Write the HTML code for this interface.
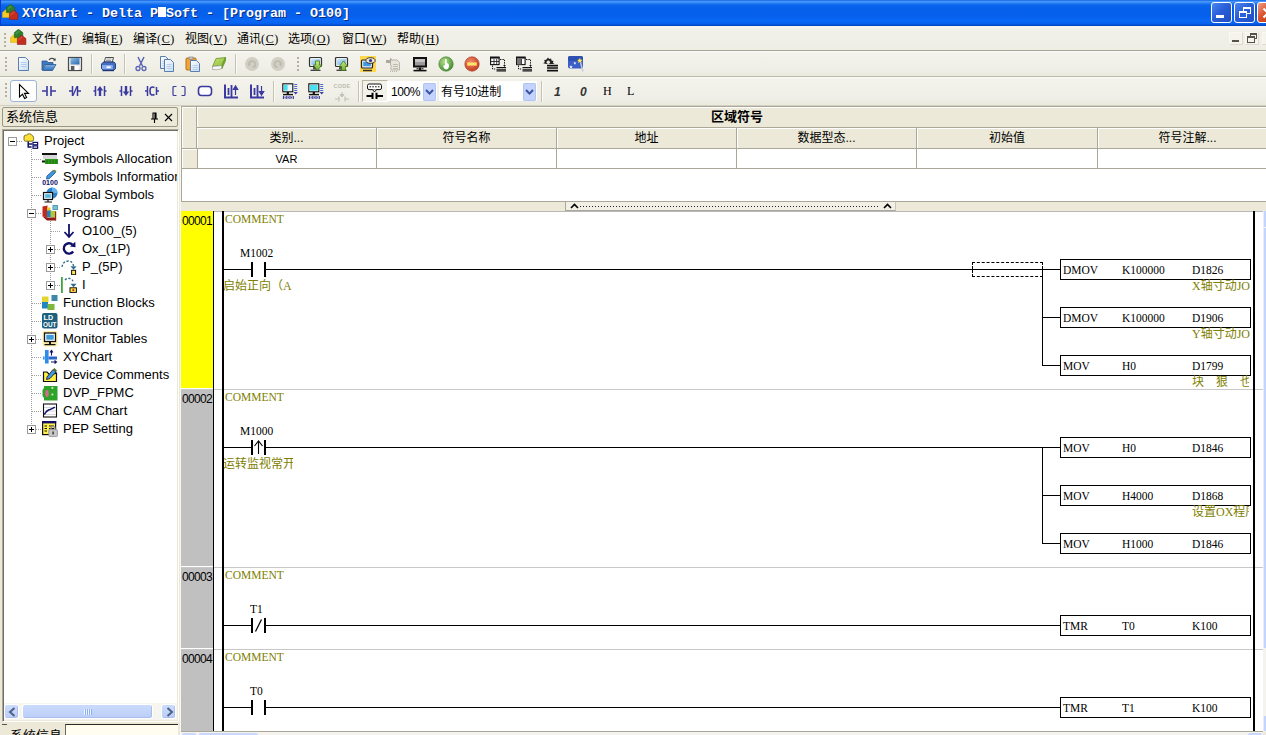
<!DOCTYPE html>
<html lang="zh-CN">
<head>
<meta charset="utf-8">
<title>XYChart - Delta PMSoft - [Program - O100]</title>
<style>
*{box-sizing:border-box;margin:0;padding:0}
html,body{width:1266px;height:735px;overflow:hidden}
body{position:relative;background:#ECE9D8;font-family:"Liberation Sans","Noto Sans CJK SC",sans-serif;font-size:12px;color:#000}
.abs{position:absolute}
.cn{font-family:"Liberation Sans","Noto Sans CJK SC",sans-serif;font-size:12px}
/* title bar */
#title{position:absolute;left:0;top:0;width:1266px;height:26px;box-shadow:inset 1px 0 0 #0A38C8;background:linear-gradient(to bottom,#0A5CE6 0%,#4B98F8 5%,#2F86F6 11%,#0C66EC 19%,#0660EA 30%,#0560EC 60%,#0A68F6 80%,#0862EE 90%,#0450D2 96%,#0340B4 100%)}
#title .txt{position:absolute;left:22px;top:6px;font-family:"Liberation Mono","DejaVu Sans Mono",monospace;font-weight:bold;font-size:13.33px;line-height:16px;color:#fff;white-space:pre;text-shadow:1px 1px 0 #0A2A8A}
/* menu */
#menu{position:absolute;left:0;top:26px;width:1266px;height:24px;background:linear-gradient(to bottom,#F6F5F0 0,#F1F0E8 20%,#EFEEE5 100%)}
#menu .mi{position:absolute;top:6px;height:14px;line-height:14px;font-size:12px;white-space:nowrap}
#menu .mi u{text-decoration:underline}
.lat{font-family:"Liberation Serif",serif;letter-spacing:0.6px}
/* toolbars */
#tb1{position:absolute;left:0;top:50px;width:1266px;height:27px;background:linear-gradient(to bottom,#FCFCFA 0,#F3F2EB 8%,#F0EFE7 70%,#EBEADF);border-top:1px solid #A7A597;border-bottom:1px solid #BDBAA8}
#tb2{position:absolute;left:0;top:77px;width:1266px;height:29px;background:linear-gradient(to bottom,#FCFCFA 0,#F3F2EB 8%,#F0EFE7 70%,#EBEADF);border-bottom:1px solid #D2CFC0}
.mdi{position:absolute;top:6px;width:14px;height:13px;background:#F4F3EC;border:1px solid #F9F8F4;border-right-color:#DEDBCC;border-bottom-color:#DEDBCC}
.grip{position:absolute;width:2px;background:repeating-linear-gradient(to bottom,#B4B19E 0,#B4B19E 2px,transparent 2px,transparent 4px)}
.blk{display:inline-block;width:8px;height:10px;background:#fff;color:#fff;overflow:hidden;vertical-align:baseline;line-height:10px;text-shadow:none}
.cb{position:absolute;top:2px;width:21px;height:21px;border:1px solid #fff;border-radius:3px;background:linear-gradient(135deg,#4B86F0 0%,#2A5FD8 45%,#1E4FC4 100%)}
.cbx{background:linear-gradient(135deg,#F0A088 0%,#D8502A 45%,#C03A1A 100%)}
.sep{position:absolute;width:1px;background:#C5C2B2;box-shadow:1px 0 0 #FBFAF6}
/* left panel */
#lph{position:absolute;left:2px;top:107px;width:176px;height:20px;border:1px solid #9A9786;border-radius:2px;background:#ECE9D8}
#tree{position:absolute;left:2px;top:129px;width:177px;height:593px;background:#fff;border:1px solid;border-color:#ACA899 #fff #fff #ACA899;box-shadow:inset 1px 1px 0 #716F64,inset -1px -1px 0 #ECE9D8}
.tr{position:absolute;height:18px;line-height:18px;font-size:13px;white-space:nowrap;letter-spacing:0}
.sbb{position:absolute;background:linear-gradient(to bottom,#CBDBFD,#BCCEF8);border:1px solid #fff;border-radius:3px;box-shadow:inset -1px -1px 0 #A9BDEE}
/* grid */
#grid{position:absolute;left:181px;top:106px;width:1085px;height:96px;background:#fff;border-top:1px solid #ACA899;border-left:1px solid #ACA899;border-bottom:1px solid #ACA899}
.gh{position:absolute;background:#ECE9D8;border-right:1px solid #ACA899;border-bottom:1px solid #ACA899;box-shadow:inset 1px 1px 0 #fff;text-align:center;font-size:12px;line-height:20px;white-space:nowrap;overflow:hidden}
.gc{position:absolute;background:#fff;border-right:1px solid #ACA899;border-bottom:1px solid #ACA899;text-align:center;font-size:11px;line-height:20px}
/* ladder */
#lad{position:absolute;left:181px;top:211px;width:1082px;height:521px;background:#fff;overflow:hidden}
.ser{font-family:"Liberation Serif",serif;font-size:11.5px;line-height:14px;white-space:pre;position:absolute}
.olv{color:#808000}
.hl{position:absolute;height:1px;background:#000}
.vl{position:absolute;width:1px;background:#000}
.bar{position:absolute;width:2px;height:15px;background:#000}
.box{position:absolute;left:879px;width:191px;height:21px;border:1px solid #000;background:#fff}
.cmt{position:absolute;font-family:"Liberation Serif","Noto Sans CJK SC",sans-serif;font-size:12px;line-height:14px;white-space:nowrap;overflow:hidden;height:14px}
.lat2{font-family:"Liberation Serif",serif;font-size:12px}
.rs{position:absolute;left:0;width:1082px;height:1px;background:#C8C8C8}
.rn{position:absolute;left:0;width:31px;font-size:12px;line-height:14px;text-align:left;padding-left:1px;letter-spacing:-0.7px}
</style>
</head>
<body>
<!-- TITLE -->
<div id="title">
<svg class="abs" style="left:2px;top:4px" width="17" height="17" viewBox="0 0 17 17"><path d="M0.4 8.6L4 5.4L8 8.6V13.4H0.4Z" fill="#F4CC22" stroke="#D8A818" stroke-width=".5"/><path d="M4.4 3.6L8.5 0.3L12.8 3.6V8.6H4.4Z" fill="#2A7E2E" stroke="#1C5E22" stroke-width=".6"/><path d="M5.4 3.9L8.5 1.4L10 2.6L6 6Z" fill="#4FA048" opacity=".7"/><path d="M7.4 9.6L11.6 6.2L15.9 9.6V15.5H7.4Z" fill="#C42C20" stroke="#8A1C16" stroke-width=".6"/><path d="M8.2 9.9L11.6 7.2L13 8.4L8.2 12Z" fill="#DC5A44" opacity=".6"/></svg>
<div class="txt">XYChart - Delta P<span class="blk">M</span>Soft - [Program - O100]</div>
<div class="cb" style="left:1211px"><i style="position:absolute;left:4px;top:12px;width:8px;height:3px;background:#fff"></i></div>
<div class="cb" style="left:1234px"><i style="position:absolute;left:8px;top:4px;width:8px;height:7px;border:1px solid #fff;border-top-width:2px"></i><i style="position:absolute;left:4px;top:8px;width:8px;height:7px;border:1px solid #fff;border-top-width:2px;background:#2A5FD8"></i></div>
<div class="cb cbx" style="left:1257px"><svg class="abs" style="left:4px;top:4px" width="12" height="12" viewBox="0 0 12 12"><path d="M1.5 1.5L10.5 10.5M10.5 1.5L1.5 10.5" stroke="#fff" stroke-width="2.2"/></svg></div>
</div>
<!-- MENU -->
<div id="menu">
<div class="grip" style="left:4px;top:7px;height:16px"></div>
<svg class="abs" style="left:10px;top:3px" width="17" height="17" viewBox="0 0 17 17"><path d="M0.4 8.6L4 5.4L8 8.6V13.4H0.4Z" fill="#F4CC22" stroke="#D8A818" stroke-width=".5"/><path d="M4.4 3.6L8.5 0.3L12.8 3.6V8.6H4.4Z" fill="#2A7E2E" stroke="#1C5E22" stroke-width=".6"/><path d="M5.4 3.9L8.5 1.4L10 2.6L6 6Z" fill="#4FA048" opacity=".7"/><path d="M7.4 9.6L11.6 6.2L15.9 9.6V15.5H7.4Z" fill="#C42C20" stroke="#8A1C16" stroke-width=".6"/><path d="M8.2 9.9L11.6 7.2L13 8.4L8.2 12Z" fill="#DC5A44" opacity=".6"/></svg>
<div class="mi" style="left:32px">文件<span class="lat">(<u>F</u>)</span></div>
<div class="mi" style="left:82px">编辑<span class="lat">(<u>E</u>)</span></div>
<div class="mi" style="left:133px">编译<span class="lat">(<u>C</u>)</span></div>
<div class="mi" style="left:185px">视图<span class="lat">(<u>V</u>)</span></div>
<div class="mi" style="left:237px">通讯<span class="lat">(<u>C</u>)</span></div>
<div class="mi" style="left:288px">选项<span class="lat">(<u>O</u>)</span></div>
<div class="mi" style="left:342px">窗口<span class="lat">(<u>W</u>)</span></div>
<div class="mi" style="left:397px">帮助<span class="lat">(<u>H</u>)</span></div>
<div class="mdi" style="left:1229px"><i style="position:absolute;left:2px;top:7px;width:7px;height:2px;background:#55524A"></i></div>
<div class="mdi" style="left:1245px"><i style="position:absolute;left:4px;top:0px;width:7px;height:6px;border:1px solid #55524A;border-top-width:2px"></i><i style="position:absolute;left:1px;top:3px;width:8px;height:7px;border:1px solid #55524A;border-top-width:2px;background:#F4F3EC"></i></div>
<div class="mdi" style="left:1262px"></div>
</div>
<!-- TOOLBAR 1 -->
<svg width="0" height="0" style="position:absolute"><defs>
<linearGradient id="gpg" x1="0" y1="0" x2="1" y2="1"><stop offset="0" stop-color="#FFFFFF"/><stop offset="1" stop-color="#C4DCF4"/></linearGradient>
<linearGradient id="gbl" x1="0" y1="0" x2="0" y2="1"><stop offset="0" stop-color="#7FB2E8"/><stop offset="1" stop-color="#2E6CB8"/></linearGradient>
<linearGradient id="ggr" x1="0" y1="0" x2="0" y2="1"><stop offset="0" stop-color="#CDEB84"/><stop offset="1" stop-color="#6AAE2A"/></linearGradient>
<linearGradient id="gfl" x1="0" y1="0" x2="1" y2="1"><stop offset="0" stop-color="#8CC0E6"/><stop offset="1" stop-color="#2A68AE"/></linearGradient>
<linearGradient id="ger" x1="0" y1="0" x2="1" y2="1"><stop offset="0" stop-color="#C6E070"/><stop offset="1" stop-color="#8CBF3A"/></linearGradient>
<linearGradient id="gsc" x1="0" y1="0" x2="1" y2="1"><stop offset="0" stop-color="#CFEAF8"/><stop offset="1" stop-color="#5AA6D8"/></linearGradient>
<radialGradient id="ggc" cx=".4" cy=".35" r=".7"><stop offset="0" stop-color="#B6DE8A"/><stop offset="1" stop-color="#3E8A2A"/></radialGradient>
<radialGradient id="grc" cx=".4" cy=".35" r=".7"><stop offset="0" stop-color="#F08A6A"/><stop offset="1" stop-color="#C2391E"/></radialGradient>
</defs></svg>
<div id="tb1">
<div class="grip" style="left:5px;top:6px;height:16px"></div>
<svg class="abs" style="left:15px;top:5px" width="16" height="16" viewBox="0 0 16 16"><path d="M3.5 1.5h7l3 3v10h-10z" fill="url(#gpg)" stroke="#5A7DB0" stroke-width="1"/><path d="M5.5 6.5h6M5.5 8.5h6M5.5 10.5h6" stroke="#A9C6E6" stroke-width=".8"/></svg>
<svg class="abs" style="left:41px;top:5px" width="16" height="16" viewBox="0 0 16 16"><path d="M1 5h5l1 1.5h5v2H3.5L1 14z" fill="#3E78C0" stroke="#2A5590" stroke-width=".8"/><path d="M1.5 14.5L4.5 8.5H15L11.5 14.5z" fill="url(#gbl)" stroke="#2A5590" stroke-width=".8"/><path d="M8 4Q10.5 .8 13.5 3.5" stroke="#333" stroke-width="1.1" fill="none"/><path d="M12 4.5l2.7.3-.3-2.9z" fill="#333"/></svg>
<svg class="abs" style="left:67px;top:5px" width="16" height="16" viewBox="0 0 16 16"><rect x="1.5" y="1.5" width="13" height="13" fill="#EDEDED" stroke="#4A4A4A" stroke-width="1.2"/><rect x="3.5" y="2" width="9" height="6.5" fill="url(#gfl)"/><rect x="4" y="10" width="3.6" height="4" fill="#5A5A5A"/><rect x="7.6" y="10" width="4" height="4" fill="#fff"/></svg>
<svg class="abs" style="left:100px;top:5px" width="16" height="16" viewBox="0 0 16 16"><path d="M5.5 1.5h8l-1.2 4.5h-8z" fill="#F8FAFD" stroke="#3A3A3A" stroke-width=".9"/><path d="M6.5 3h5M6 4.5h5" stroke="#8A8A8A" stroke-width=".8"/><path d="M3.5 6h10.5l1.5 1.8v4.7l-1.5 1.7h-11l-1.5-1.7v-4.5z" fill="#456FC0" stroke="#1E3470" stroke-width=".9"/><path d="M2 9h10.8v4.3H2.8L2 12.5z" fill="#86ACEE"/><rect x="6.5" y="10.3" width="4.2" height="1.8" fill="#fff"/><path d="M2.5 14.6h11.5" stroke="#1E3470" stroke-width="1.2"/></svg>
<svg class="abs" style="left:133px;top:5px" width="16" height="16" viewBox="0 0 16 16"><path d="M5 1L9.5 10M11 1L6.5 10" stroke="#5A64B0" stroke-width="1.5" fill="none"/><circle cx="5" cy="12.5" r="2" fill="none" stroke="#5A64B0" stroke-width="1.3"/><circle cx="11" cy="12.5" r="2" fill="none" stroke="#5A64B0" stroke-width="1.3"/></svg>
<svg class="abs" style="left:159px;top:5px" width="16" height="16" viewBox="0 0 16 16"><path d="M1.5 0.5h5l3 3v9h-8z" fill="url(#gpg)" stroke="#5A7DB0" stroke-width="1"/><path d="M3.5 5.5h4M3.5 7.5h4M3.5 9.5h4" stroke="#A9C6E6" stroke-width=".8"/><path d="M5.5 3.5h6l3 3v9h-9z" fill="url(#gpg)" stroke="#5A7DB0" stroke-width="1"/><path d="M7.5 8.5h5M7.5 10.5h5M7.5 12.5h5" stroke="#A9C6E6" stroke-width=".8"/></svg>
<svg class="abs" style="left:185px;top:5px" width="16" height="16" viewBox="0 0 16 16"><rect x="1" y="2" width="10" height="12" rx="1" fill="#F2A33A" stroke="#B87214" stroke-width="1"/><rect x="4" y="1" width="4" height="2.2" fill="#C8CCD4" stroke="#777" stroke-width=".6"/><path d="M5.5 4.5h6l3 3v8h-9z" fill="url(#gpg)" stroke="#5A7DB0" stroke-width="1"/><path d="M7.5 9.5h5M7.5 11.5h5M7.5 13.5h5" stroke="#A9C6E6" stroke-width=".8"/></svg>
<svg class="abs" style="left:211px;top:5px" width="16" height="16" viewBox="0 0 16 16"><path d="M5 2.5L14.5 1.5L11 9.5L1.5 10.5z" fill="url(#ger)" stroke="#5A8A1A" stroke-width=".7"/><path d="M1.5 10.5L11 9.5V12.5Q6 14.5 1.5 13.5z" fill="#F8F8F8" stroke="#999" stroke-width=".7"/><path d="M11 9.5L14.5 1.5V5L11 12.5z" fill="#7AB03A" stroke="#5A8A1A" stroke-width=".6"/></svg>
<svg class="abs" style="left:244px;top:5px" width="16" height="16" viewBox="0 0 16 16"><circle cx="8" cy="8" r="7" fill="#D2D0C4"/><path d="M5 8.5A3.2 3.2 0 1 1 8.5 11.5" stroke="#BDBBAE" stroke-width="1.6" fill="none"/><path d="M3.2 7.5l2 3 2-3z" fill="#BDBBAE"/></svg>
<svg class="abs" style="left:270px;top:5px" width="16" height="16" viewBox="0 0 16 16"><circle cx="8" cy="8" r="7" fill="#D2D0C4"/><path d="M11 8.5A3.2 3.2 0 1 0 7.5 11.5" stroke="#BDBBAE" stroke-width="1.6" fill="none"/><path d="M12.8 7.5l-2 3-2-3z" fill="#BDBBAE"/></svg>
<svg class="abs" style="left:308px;top:5px" width="16" height="16" viewBox="0 0 16 16"><rect x="1.5" y="1.5" width="12" height="9" rx="1" fill="#E8EEF2" stroke="#333" stroke-width="1.2"/><rect x="3.2" y="3.2" width="8.6" height="5.6" fill="url(#gsc)"/><path d="M5 11h5v2.5h-5z" fill="#555"/><path d="M2.5 14.3h10" stroke="#444" stroke-width="1.4"/><path d="M7.5 5h4v4h2.2l-4.2 5.5L5.3 9h2.2z" fill="url(#ggr)" stroke="#3A6A14" stroke-width=".7"/></svg>
<svg class="abs" style="left:334px;top:5px" width="16" height="16" viewBox="0 0 16 16"><rect x="1.5" y="1.5" width="12" height="9" rx="1" fill="#E8EEF2" stroke="#333" stroke-width="1.2"/><rect x="3.2" y="3.2" width="8.6" height="5.6" fill="url(#gsc)"/><path d="M5 11h5v2.5h-5z" fill="#555"/><path d="M2.5 14.3h10" stroke="#444" stroke-width="1.4"/><path d="M7.5 14.5h4v-4h2.2L9.5 5 5.3 10.5h2.2z" fill="url(#ggr)" stroke="#3A6A14" stroke-width=".7"/></svg>
<svg class="abs" style="left:360px;top:5px" width="16" height="16" viewBox="0 0 16 16"><rect x="0" y="0" width="16" height="16" fill="#FFD84A"/><rect x="1.5" y="4" width="11" height="8" rx="1" fill="#E8EEF2" stroke="#223" stroke-width="1.2"/><rect x="3.2" y="5.8" width="7.6" height="4.4" fill="#3E9AE0"/><path d="M3 14.5h9" stroke="#333" stroke-width="1.5"/><ellipse cx="10.5" cy="4.5" rx="4.6" ry="2.8" fill="#F4E8D0" stroke="#333" stroke-width="1"/><circle cx="10.5" cy="4.5" r="1.6" fill="#2A3A8A"/></svg>
<svg class="abs" style="left:385px;top:5px" width="16" height="16" viewBox="0 0 16 16"><path d="M1 4h4V1.5L9 5.5 5 9.5V7H1z" fill="#ACAA9E"/><path d="M6 4h6l2.5 2.5V14H6V9" fill="#E8E6DC" stroke="#B8B6AA" stroke-width="1"/><path d="M8 8.5h5M8 10.5h5M8 12.5h5" stroke="#B8B6AA" stroke-width=".9"/><path d="M5 15.5h8" stroke="#B8B6AA" stroke-width="1" stroke-dasharray="1 1"/></svg>
<svg class="abs" style="left:412px;top:5px" width="16" height="16" viewBox="0 0 16 16"><rect x="1" y="1" width="14" height="10.5" fill="#111"/><rect x="3" y="3" width="10" height="6.5" fill="#9A9A9A"/><rect x="3" y="3" width="10" height="3" fill="#C4C4C4"/><path d="M8 11.5v2.5" stroke="#111" stroke-width="2.4"/><path d="M1.5 14.6h13" stroke="#111" stroke-width="1.6"/><path d="M4.5 12.8h2M9.5 12.8h2" stroke="#111" stroke-width="1"/></svg>
<svg class="abs" style="left:438px;top:5px" width="16" height="16" viewBox="0 0 16 16"><circle cx="8" cy="8" r="7.2" fill="url(#ggc)" stroke="#3E7A2A" stroke-width=".6"/><path d="M7 3.2Q8 2.4 8.6 3.4L8.8 7Q11 7.2 11 9.5Q11 13 8.5 13.4Q6 13.4 5.4 10.5Q5.2 9 6.4 9.2L7 9.6z" fill="#fff"/></svg>
<svg class="abs" style="left:464px;top:5px" width="16" height="16" viewBox="0 0 16 16"><circle cx="8" cy="8" r="7.2" fill="url(#grc)" stroke="#A8321C" stroke-width=".6"/><rect x="3.2" y="6.4" width="9.6" height="3.2" fill="#FFE26A"/></svg>
<svg class="abs" style="left:490px;top:5px" width="16" height="16" viewBox="0 0 16 16"><rect x="0.6" y="1.6" width="8.5" height="7" fill="#fff" stroke="#111" stroke-width="1.1"/><rect x="0" y="0.5" width="9.6" height="2" fill="#111"/><path d="M1 5.5h8M4 3v5.5M6.7 3v5.5" stroke="#111" stroke-width=".8"/><path d="M10 3.5h4.5V10M2.5 9.5V13H6" stroke="#111" stroke-width="1" stroke-dasharray="1.4 1" fill="none"/><path d="M13.2 9l1.3 2 1.3-2z" fill="#111"/><path d="M6.5 11.5h9.5M6.5 13.2h9.5M6.5 14.9h9.5" stroke="#111" stroke-width="1.1"/></svg>
<svg class="abs" style="left:516px;top:5px" width="16" height="16" viewBox="0 0 16 16"><rect x="0.6" y="1.6" width="8.5" height="7" fill="#fff" stroke="#111" stroke-width="1.1"/><rect x="0" y="0.5" width="9.6" height="2" fill="#111"/><rect x="1" y="2.5" width="4.4" height="6" fill="#777"/><path d="M5.4 3v5.5" stroke="#111" stroke-width=".8"/><path d="M10 3.5h4.5V10M2.5 9.5V13H6" stroke="#111" stroke-width="1" stroke-dasharray="1.4 1" fill="none"/><path d="M13.2 9l1.3 2 1.3-2z" fill="#111"/><path d="M6.5 11.5h9.5M6.5 13.2h9.5M6.5 14.9h9.5" stroke="#111" stroke-width="1.1"/></svg>
<svg class="abs" style="left:542px;top:5px" width="16" height="16" viewBox="0 0 16 16"><path d="M6 1.5l1.2 1.6 1.9-.6.4 2 2 .4-.6 1.9L12.5 8H4.2L1.2 7.2l1.6-1.2-.6-1.9 2-.4z" fill="#222"/><circle cx="6.3" cy="6.2" r="1.7" fill="#EDEBDD"/><path d="M5 9.6h11M5 12h11M5 14.6h11" stroke="#111" stroke-width="1.7"/></svg>
<svg class="abs" style="left:568px;top:5px" width="16" height="16" viewBox="0 0 16 16"><rect x="0" y="0" width="15" height="12.5" rx="2" fill="#3A5FC8"/><rect x="0" y="0" width="15" height="5" rx="2" fill="#2F50B0"/><path d="M3 9l.6 1.2 1.2.2-.9.9.2 1.3L3 12l-1.1.6.2-1.3-.9-.9 1.2-.2zM6.8 5.5l.5 1 1 .2-.7.7.2 1-1-.5-.9.5.2-1-.7-.7 1-.2z" fill="#E8E8F8"/><path d="M11.8 2l.8 1.6 1.8.3-1.3 1.3.3 1.8-1.6-.9-1.6.9.3-1.8-1.3-1.3 1.8-.3z" fill="#FFE84A"/><path d="M12.5 6.5L15 15.5" stroke="#C8C8D8" stroke-width="1.4"/></svg>
<div class="sep" style="left:91px;top:3px;height:20px"></div>
<div class="sep" style="left:124px;top:3px;height:20px"></div>
<div class="sep" style="left:235px;top:3px;height:20px"></div>
<div class="grip" style="left:297px;top:6px;height:16px"></div>
</div>
<!-- TOOLBAR 2 -->
<div id="tb2">
<div class="grip" style="left:5px;top:6px;height:16px"></div>
<div class="abs" style="left:0;top:1px">
<div class="abs" style="left:10px;top:2px;width:27px;height:22px;border:1px solid #9DB4D6;border-radius:3px;background:#FDFDFB"></div>
<svg class="abs" style="left:15px;top:5px" width="18" height="18" viewBox="0 0 18 18"><path d="M4.5 1.5V14L7.5 11.2L9.6 15.5L11.6 14.5L9.5 10.4H13.5z" fill="#fff" stroke="#000" stroke-width="1.1"/></svg>
<svg class="abs" style="left:41px;top:5px" width="16" height="16" viewBox="0 0 16 16"><path d="M1 8h5M10 8h5" stroke="#3A3AA0" stroke-width="1.4"/><path d="M6 3v10M10 3v10" stroke="#3A3AA0" stroke-width="1.6"/></svg>
<svg class="abs" style="left:67px;top:5px" width="16" height="16" viewBox="0 0 16 16"><path d="M2 8h3.5M10.5 8H14" stroke="#3A3AA0" stroke-width="1.4"/><path d="M5.5 3v10M10.5 3v10" stroke="#3A3AA0" stroke-width="1.5"/><path d="M6 12.5L10 3.5" stroke="#3A3AA0" stroke-width="1.3"/></svg>
<svg class="abs" style="left:92px;top:5px" width="16" height="16" viewBox="0 0 16 16"><path d="M1.5 8h2M12.5 8h2" stroke="#3A3AA0" stroke-width="1.3"/><path d="M3.5 3v10M12.5 3v10" stroke="#3A3AA0" stroke-width="1.5"/><path d="M8 13V6" stroke="#3A3AA0" stroke-width="2.4"/><path d="M4.8 7.5L8 3l3.2 4.5z" fill="#3A3AA0"/></svg>
<svg class="abs" style="left:118px;top:5px" width="16" height="16" viewBox="0 0 16 16"><path d="M1.5 8h2M12.5 8h2" stroke="#3A3AA0" stroke-width="1.3"/><path d="M3.5 3v10M12.5 3v10" stroke="#3A3AA0" stroke-width="1.5"/><path d="M8 3v7" stroke="#3A3AA0" stroke-width="2.4"/><path d="M4.8 8.5L8 13l3.2-4.5z" fill="#3A3AA0"/></svg>
<svg class="abs" style="left:144px;top:5px" width="16" height="16" viewBox="0 0 16 16"><path d="M1 8h2.5M12.5 8H15" stroke="#3A3AA0" stroke-width="1.3"/><path d="M3.5 3v10M12.5 4v8" stroke="#3A3AA0" stroke-width="1.5"/><path d="M10.5 4.5Q6 2.5 6 8Q6 13.5 10.5 11.5" stroke="#3A3AA0" stroke-width="1.6" fill="none"/></svg>
<svg class="abs" style="left:171px;top:5px" width="16" height="16" viewBox="0 0 16 16"><path d="M5.5 3.5H3Q2 3.5 2 4.5v7Q2 12.5 3 12.5H5.5M10.5 3.5H13Q14 3.5 14 4.5v7Q14 12.5 13 12.5H10.5" stroke="#3A3AA0" stroke-width="1.2" fill="none"/></svg>
<svg class="abs" style="left:197px;top:5px" width="16" height="16" viewBox="0 0 16 16"><rect x="1.5" y="3.5" width="13" height="9" rx="3" fill="#fff" stroke="#3A3AA0" stroke-width="1.6"/></svg>
<svg class="abs" style="left:223px;top:5px" width="16" height="16" viewBox="0 0 16 16"><path d="M2 1.5V14.5H15" stroke="#3A3AA0" stroke-width="2" fill="none"/><path d="M5.5 5v7M8.5 2v12" stroke="#3A3AA0" stroke-width="1.8"/><path d="M12.5 12V4M10.3 6.5L12.5 3l2.2 3.5z" stroke="#3A3AA0" stroke-width="1.2" fill="#3A3AA0"/></svg>
<svg class="abs" style="left:249px;top:5px" width="16" height="16" viewBox="0 0 16 16"><path d="M2 1.5V14.5H15" stroke="#3A3AA0" stroke-width="2" fill="none"/><path d="M5.5 5v7M8.5 2v12" stroke="#3A3AA0" stroke-width="1.8"/><path d="M12.5 3v8M10.3 8.5l2.2 3.5 2.2-3.5z" stroke="#3A3AA0" stroke-width="1.2" fill="#3A3AA0"/></svg>
<svg class="abs" style="left:282px;top:5px" width="16" height="16" viewBox="0 0 16 16"><rect x="0.8" y="0.8" width="10" height="8" fill="#EAF6FA" stroke="#111" stroke-width="1.1"/><rect x="2" y="2" width="3.6" height="5.6" fill="#4AE0F0"/><path d="M5.8 9v2" stroke="#111" stroke-width="2.2"/><path d="M1 11.6h10" stroke="#111" stroke-width="1.4"/><path d="M12.2 1.5h3M12.2 3.5h3M12.2 5.5h3M12.2 7.5h3" stroke="#4A6AD0" stroke-width="1.2"/><path d="M11.6 9h4.2l-2.1 2.6z" fill="#3A3AA0"/><path d="M1.5 13v3M4.8 13v3M8 13v3M11.3 13v3" stroke="#3A3AA0" stroke-width="1.2"/><path d="M3.2 13.5v2M6.4 13.5v2M9.6 13.5v2" stroke="#3A3AA0" stroke-width=".9"/></svg>
<svg class="abs" style="left:308px;top:5px" width="16" height="16" viewBox="0 0 16 16"><rect x="0.8" y="0.8" width="10" height="8" fill="#EAF6FA" stroke="#111" stroke-width="1.1"/><rect x="2" y="2" width="7.6" height="5.6" fill="#4AE0F0"/><path d="M5.8 9v2" stroke="#111" stroke-width="2.2"/><path d="M1 11.6h10" stroke="#111" stroke-width="1.4"/><path d="M12.2 1.5h3M12.2 3.5h3M12.2 5.5h3M12.2 7.5h3" stroke="#4A6AD0" stroke-width="1.2"/><path d="M11.6 9h4.2l-2.1 2.6z" fill="#3A3AA0"/><path d="M1.5 13v3M4.8 13v3M8 13v3M11.3 13v3" stroke="#3A3AA0" stroke-width="1.2"/><path d="M3.2 13.5v2M6.4 13.5v2M9.6 13.5v2" stroke="#3A3AA0" stroke-width=".9"/></svg>
<div class="abs" style="left:332px;top:4px;width:20px;font-family:'Liberation Sans',sans-serif;font-size:5.5px;line-height:8px;letter-spacing:.3px;color:#BEBCAE;text-align:center;font-weight:bold">CODE</div>
<svg class="abs" style="left:334px;top:12px" width="16" height="16" viewBox="0 0 16 16"><path d="M1 9h4M11 9h4M5 6.5v5M11 6.5v5" stroke="#C2C0B2" stroke-width="1.1"/><path d="M8 2v3M6 4.5l2 2.5 2-2.5z" stroke="#C2C0B2" stroke-width="1" fill="#C2C0B2"/></svg>
<div class="sep" style="left:273px;top:3px;height:21px"></div>
<div class="sep" style="left:358px;top:3px;height:21px"></div>
<div class="abs" style="left:362px;top:2px;width:26px;height:22px;border:1px solid #B8B5A2;border-right-color:#fff;border-bottom-color:#fff;background:#F3F2EA"></div>
<svg class="abs" style="left:366px;top:5px" width="18" height="17" viewBox="0 0 18 17"><rect x="1.5" y="1" width="14" height="5.6" rx="1.6" fill="#fff" stroke="#111" stroke-width="1"/><path d="M3.5 3.8h10" stroke="#111" stroke-width="1" stroke-dasharray="1.6 1.2"/><path d="M6.5 6.6l2 2.4 2-2.4" fill="#fff" stroke="#111" stroke-width="1"/><path d="M0.5 13h6M10.5 13h6.5" stroke="#000" stroke-width="2"/><path d="M6.5 9.8v6.2M10.5 9.8v6.2" stroke="#000" stroke-width="2"/></svg>
<div class="abs" style="left:388px;top:3px;width:49px;height:20px;background:#fff"></div>
<div class="abs" style="left:391px;top:7px;font-size:12px;line-height:14px;letter-spacing:-.4px">100%</div>
<svg class="abs" style="left:423px;top:5px" width="13" height="18" viewBox="0 0 13 18"><rect width="13" height="18" rx="1.5" fill="#C3D3FB"/><rect x=".5" y=".5" width="12" height="17" rx="1.5" fill="none" stroke="#B2C4F2"/><path d="M3 7l3.5 3.6L10 7" stroke="#3A52A0" stroke-width="2" fill="none"/></svg>
<div class="abs" style="left:439px;top:3px;width:98px;height:20px;background:#fff"></div>
<div class="abs cn" style="left:441px;top:7px;font-size:12px;line-height:15px;white-space:nowrap">有号<span style="font-family:'Liberation Sans',sans-serif;letter-spacing:-.6px">10</span>进制</div>
<svg class="abs" style="left:523px;top:5px" width="13" height="18" viewBox="0 0 13 18"><rect width="13" height="18" rx="1.5" fill="#C3D3FB"/><rect x=".5" y=".5" width="12" height="17" rx="1.5" fill="none" stroke="#B2C4F2"/><path d="M3 7l3.5 3.6L10 7" stroke="#3A52A0" stroke-width="2" fill="none"/></svg>
<div class="sep" style="left:541px;top:3px;height:21px"></div>
<div class="abs" style="left:554px;top:7px;font:italic bold 12px/15px 'Liberation Sans',sans-serif;color:#333">1</div>
<div class="abs" style="left:580px;top:7px;font:italic bold 12px/15px 'Liberation Sans',sans-serif;color:#333">0</div>
<div class="abs" style="left:603px;top:6px;font:12px/15px 'Liberation Serif',serif">H</div>
<div class="abs" style="left:627px;top:6px;font:12px/15px 'Liberation Serif',serif">L</div>
</div></div>
<!-- LEFT PANEL -->
<div id="lph"><span class="abs cn" style="left:3px;top:1px;line-height:15px;font-size:13px">系统信息</span>
<svg class="abs" style="left:147px;top:4px" width="24" height="12" viewBox="0 0 24 12"><path d="M2.5 1H6.5M3 1V6.5M6 1V6.5M5 1V6.5M1 7H8M4.5 7V11" stroke="#000" stroke-width="1.1" fill="none"/><path d="M15 2L22 9M22 2L15 9" stroke="#000" stroke-width="1.1" fill="none"/></svg>
</div>
<div id="tree"></div>
<div class="abs" style="left:4px;top:131px;width:173px;height:572px;overflow:hidden">
<div class="abs" style="left:27px;top:18px;width:1px;height:280px;background:repeating-linear-gradient(to bottom,#A0A0A0 0,#A0A0A0 1px,transparent 1px,transparent 2px)"></div>
<div class="abs" style="left:46px;top:90px;width:1px;height:64px;background:repeating-linear-gradient(to bottom,#A0A0A0 0,#A0A0A0 1px,transparent 1px,transparent 2px)"></div>
<div class="abs" style="left:13px;top:10px;width:6px;height:1px;background:repeating-linear-gradient(to right,#A0A0A0 0,#A0A0A0 1px,transparent 1px,transparent 2px)"></div>
<div class="abs" style="left:4px;top:6px;width:9px;height:9px;border:1px solid #9A9A9A;background:#fff"><i style="position:absolute;left:1px;top:3px;width:5px;height:1px;background:#000"></i></div>
<svg class="abs" style="left:19px;top:2px" width="16" height="16" viewBox="0 0 16 16"><path d="M1 4Q1 2.2 2.8 2.2L3.6 2.2Q4.6 0.6 6.6 0.8Q8.6 1 9 2.6Q10.6 3 10.6 4.6L10.6 6.6Q10.6 8.2 9 8.2L2.6 8.2Q1 8.2 1 6.6Z" fill="#FCE23A" stroke="#6E6412" stroke-width=".9"/><path d="M5.2 8.6V14H8.6M5.2 11H9.4" stroke="#10106A" stroke-width="1.5" fill="none"/><rect x="10" y="9.4" width="4.6" height="2.4" fill="#fff" stroke="#10106A" stroke-width="1.2"/><rect x="10" y="12.9" width="4.6" height="2.4" fill="#fff" stroke="#10106A" stroke-width="1.2"/></svg>
<div class="tr" style="left:40px;top:1px">Project</div>
<div class="abs" style="left:28px;top:28px;width:9px;height:1px;background:repeating-linear-gradient(to right,#A0A0A0 0,#A0A0A0 1px,transparent 1px,transparent 2px)"></div>
<svg class="abs" style="left:38px;top:20px" width="16" height="16" viewBox="0 0 16 16"><rect x="0" y="2" width="15" height="2" fill="#111"/><rect x="1" y="4" width="14" height="4" fill="#D8D8D8"/><rect x="3" y="8" width="13" height="5" fill="#2E9A1E"/><rect x="0" y="9.5" width="3" height="2" fill="#111"/><path d="M5 9V13M8 9V13M11 9V13M14 9V13" stroke="#1B6B10" stroke-width="1"/></svg>
<div class="tr" style="left:59px;top:19px">Symbols Allocation</div>
<div class="abs" style="left:28px;top:46px;width:9px;height:1px;background:repeating-linear-gradient(to right,#A0A0A0 0,#A0A0A0 1px,transparent 1px,transparent 2px)"></div>
<svg class="abs" style="left:38px;top:38px" width="16" height="16" viewBox="0 0 16 16"><path d="M5 7L11 1.5L13.5 3.5L7.5 9.5L4.5 10Z" fill="#3E9AE0" stroke="#1A4C8A" stroke-width=".8"/><path d="M11 1.5L13.5 3.5L14.5 2L12.5 0.8Z" fill="#7A8A3A"/><text x="0.2" y="16" font-family="Liberation Sans,sans-serif" font-weight="bold" font-size="7.6" fill="#10106A" textLength="15.6" lengthAdjust="spacingAndGlyphs">0100</text></svg>
<div class="tr" style="left:59px;top:37px">Symbols Information</div>
<div class="abs" style="left:28px;top:64px;width:9px;height:1px;background:repeating-linear-gradient(to right,#A0A0A0 0,#A0A0A0 1px,transparent 1px,transparent 2px)"></div>
<svg class="abs" style="left:38px;top:56px" width="16" height="16" viewBox="0 0 16 16"><circle cx="10" cy="6" r="5.5" fill="#2C82C9"/><path d="M10 .5A5.5 5.5 0 0 1 15.5 6L10 6Z" fill="#63B4EE"/><rect x="1.5" y="5.5" width="9" height="7" fill="#EAF4FB" stroke="#111" stroke-width="1.2"/><rect x="3.2" y="7.2" width="5.6" height="3.6" fill="#58B6DC"/><path d="M6 12.5V14.5M2.5 15H10" stroke="#111" stroke-width="1.2"/></svg>
<div class="tr" style="left:59px;top:55px">Global Symbols</div>
<div class="abs" style="left:32px;top:82px;width:5px;height:1px;background:repeating-linear-gradient(to right,#A0A0A0 0,#A0A0A0 1px,transparent 1px,transparent 2px)"></div>
<div class="abs" style="left:23px;top:78px;width:9px;height:9px;border:1px solid #9A9A9A;background:#fff"><i style="position:absolute;left:1px;top:3px;width:5px;height:1px;background:#000"></i></div>
<svg class="abs" style="left:38px;top:74px" width="16" height="16" viewBox="0 0 16 16"><path d="M0.5 1.5L5.5 0.5V12.5L0.5 11.5Z" fill="#C22A1E"/><path d="M5 2.5H8.5V7H5Z" fill="#EBCB2E"/><path d="M5 5.5H9.5V12H5Z" fill="#1F7FBF"/><path d="M8.5 6H14V12.5H8.5Z" fill="#A6CC3E"/><path d="M0.5 11.5L5.5 12.5H14V15.5H5Z" fill="#8E1A14"/><path d="M13.6 6.5V15.5" stroke="#A82018" stroke-width="1.2"/><rect x="10.5" y="0" width="5.5" height="5" fill="#4F9DB8"/><rect x="11.5" y="1" width="3.5" height="3" fill="#7CC0D6"/></svg>
<div class="tr" style="left:59px;top:73px">Programs</div>
<div class="abs" style="left:47px;top:100px;width:9px;height:1px;background:repeating-linear-gradient(to right,#A0A0A0 0,#A0A0A0 1px,transparent 1px,transparent 2px)"></div>
<svg class="abs" style="left:57px;top:92px" width="16" height="16" viewBox="0 0 16 16"><path d="M8 1V13M3.5 9L8 14L12.5 9" stroke="#10106A" stroke-width="1.8" fill="none"/></svg>
<div class="tr" style="left:78px;top:91px">O100_(5)</div>
<div class="abs" style="left:51px;top:118px;width:5px;height:1px;background:repeating-linear-gradient(to right,#A0A0A0 0,#A0A0A0 1px,transparent 1px,transparent 2px)"></div>
<div class="abs" style="left:42px;top:114px;width:9px;height:9px;border:1px solid #9A9A9A;background:#fff"><i style="position:absolute;left:1px;top:3px;width:5px;height:1px;background:#000"></i><i style="position:absolute;left:3px;top:1px;width:1px;height:5px;background:#000"></i></div>
<svg class="abs" style="left:57px;top:110px" width="16" height="16" viewBox="0 0 16 16"><path d="M12.2 10.5A5.2 5.2 0 1 1 11.5 3.6" stroke="#10106A" stroke-width="2.4" fill="none"/><path d="M9 5.5L14.5 6.2L14.3 0.8Z" fill="#10106A"/></svg>
<div class="tr" style="left:78px;top:109px">Ox_(1P)</div>
<div class="abs" style="left:51px;top:136px;width:5px;height:1px;background:repeating-linear-gradient(to right,#A0A0A0 0,#A0A0A0 1px,transparent 1px,transparent 2px)"></div>
<div class="abs" style="left:42px;top:132px;width:9px;height:9px;border:1px solid #9A9A9A;background:#fff"><i style="position:absolute;left:1px;top:3px;width:5px;height:1px;background:#000"></i><i style="position:absolute;left:3px;top:1px;width:1px;height:5px;background:#000"></i></div>
<svg class="abs" style="left:57px;top:128px" width="16" height="16" viewBox="0 0 16 16"><path d="M1 8Q2 2 7.5 2Q12 2.5 12.5 7" stroke="#2B6C8E" stroke-width="1.3" fill="none" stroke-dasharray="2.2 1.6"/><path d="M9.5 7.2H15.5L12.5 10.8Z" fill="#2B6C8E"/><rect x="10.6" y="11.3" width="4" height="4.4" fill="#FFE84A" stroke="#111" stroke-width="1"/></svg>
<div class="tr" style="left:78px;top:127px">P_(5P)</div>
<div class="abs" style="left:51px;top:154px;width:5px;height:1px;background:repeating-linear-gradient(to right,#A0A0A0 0,#A0A0A0 1px,transparent 1px,transparent 2px)"></div>
<div class="abs" style="left:42px;top:150px;width:9px;height:9px;border:1px solid #9A9A9A;background:#fff"><i style="position:absolute;left:1px;top:3px;width:5px;height:1px;background:#000"></i><i style="position:absolute;left:3px;top:1px;width:1px;height:5px;background:#000"></i></div>
<svg class="abs" style="left:57px;top:146px" width="16" height="16" viewBox="0 0 16 16"><rect x="0" y="0" width="1.8" height="16" fill="#3EA63A"/><path d="M4 3Q6 .8 9 1.5Q12 2.5 12.5 6" stroke="#2B6C8E" stroke-width="1.3" fill="none" stroke-dasharray="2.2 1.6"/><path d="M9.5 6.8H15.5L12.5 10.2Z" fill="#2B6C8E"/><rect x="9" y="10.8" width="6.4" height="4.6" fill="#FFE84A" stroke="#111" stroke-width="1"/><rect x="11.4" y="12.2" width="1.8" height="1.8" fill="#C2201A"/></svg>
<div class="tr" style="left:78px;top:145px">I</div>
<div class="abs" style="left:28px;top:172px;width:9px;height:1px;background:repeating-linear-gradient(to right,#A0A0A0 0,#A0A0A0 1px,transparent 1px,transparent 2px)"></div>
<svg class="abs" style="left:38px;top:164px" width="16" height="16" viewBox="0 0 16 16"><rect x="0" y="1.5" width="6.5" height="6" fill="#E2D62E"/><rect x="0" y="7" width="6" height="6.5" fill="#1E86C6"/><rect x="5.5" y="9" width="7" height="6" fill="#7DB83A"/><rect x="9.5" y="0" width="6" height="6" fill="#3F87AA"/></svg>
<div class="tr" style="left:59px;top:163px">Function Blocks</div>
<div class="abs" style="left:28px;top:190px;width:9px;height:1px;background:repeating-linear-gradient(to right,#A0A0A0 0,#A0A0A0 1px,transparent 1px,transparent 2px)"></div>
<svg class="abs" style="left:38px;top:182px" width="16" height="16" viewBox="0 0 16 16"><rect x="0" y="0" width="15.5" height="15.5" rx="2" fill="#1E5F7E"/><text x="1.6" y="7" font-family="Liberation Sans,sans-serif" font-weight="bold" font-size="6.4" fill="#fff" textLength="9.5" lengthAdjust="spacingAndGlyphs">LD</text><text x="1" y="13.8" font-family="Liberation Sans,sans-serif" font-weight="bold" font-size="6.4" fill="#fff" textLength="13.5" lengthAdjust="spacingAndGlyphs">OUT</text></svg>
<div class="tr" style="left:59px;top:181px">Instruction</div>
<div class="abs" style="left:32px;top:208px;width:5px;height:1px;background:repeating-linear-gradient(to right,#A0A0A0 0,#A0A0A0 1px,transparent 1px,transparent 2px)"></div>
<div class="abs" style="left:23px;top:204px;width:9px;height:9px;border:1px solid #9A9A9A;background:#fff"><i style="position:absolute;left:1px;top:3px;width:5px;height:1px;background:#000"></i><i style="position:absolute;left:3px;top:1px;width:1px;height:5px;background:#000"></i></div>
<svg class="abs" style="left:38px;top:200px" width="16" height="16" viewBox="0 0 16 16"><rect x="0.5" y="0" width="15" height="15.5" rx="2" fill="#FFF0A8"/><rect x="2.5" y="2" width="11" height="8.5" fill="#fff" stroke="#111" stroke-width="1.3"/><rect x="4.3" y="3.8" width="7.4" height="4.9" fill="#3E9AD8"/><path d="M8 10.5V13" stroke="#111" stroke-width="2"/><path d="M2.5 13.6H13.5" stroke="#111" stroke-width="1.3"/></svg>
<div class="tr" style="left:59px;top:199px">Monitor Tables</div>
<div class="abs" style="left:28px;top:226px;width:9px;height:1px;background:repeating-linear-gradient(to right,#A0A0A0 0,#A0A0A0 1px,transparent 1px,transparent 2px)"></div>
<svg class="abs" style="left:38px;top:218px" width="16" height="16" viewBox="0 0 16 16"><rect x="3" y="1" width="3.6" height="13.5" fill="#2D8CE8"/><rect x="1" y="7.5" width="1.6" height="3" fill="#2D8CE8"/><rect x="6.6" y="7.5" width="8.4" height="3" fill="#2A64C8"/><path d="M9.5 6.5V2M8 3.5L9.5 1.5L11 3.5" stroke="#10106A" stroke-width="1.1" fill="none"/><path d="M9 13H14M12.5 11.5L14.5 13L12.5 14.5" stroke="#10106A" stroke-width="1.1" fill="none"/></svg>
<div class="tr" style="left:59px;top:217px">XYChart</div>
<div class="abs" style="left:28px;top:244px;width:9px;height:1px;background:repeating-linear-gradient(to right,#A0A0A0 0,#A0A0A0 1px,transparent 1px,transparent 2px)"></div>
<svg class="abs" style="left:38px;top:236px" width="16" height="16" viewBox="0 0 16 16"><path d="M1.5 5H5L8 8L14.5 6V14.5H1.5Z" fill="#FFEE44" stroke="#111" stroke-width="1.2"/><path d="M5 10L11 2.5L14 5L8 11.5L4.5 12.5Z" fill="#3E9AE0" stroke="#223" stroke-width=".9"/><path d="M11 2.5L14 5L15 3.4L12.4 1Z" fill="#5C6B22"/></svg>
<div class="tr" style="left:59px;top:235px">Device Comments</div>
<div class="abs" style="left:28px;top:262px;width:9px;height:1px;background:repeating-linear-gradient(to right,#A0A0A0 0,#A0A0A0 1px,transparent 1px,transparent 2px)"></div>
<svg class="abs" style="left:38px;top:254px" width="16" height="16" viewBox="0 0 16 16"><path d="M2 1H15.5V15.5H2V13L0.5 11V5L2 3Z" fill="#2EA22A"/><ellipse cx="5" cy="8.5" rx="1.8" ry="3.4" fill="#D86A8C"/><rect x="9.5" y="2" width="1.8" height="1.8" fill="#CFF5C8"/><rect x="9.5" y="8.6" width="1.8" height="1.8" fill="#CFF5C8"/></svg>
<div class="tr" style="left:59px;top:253px">DVP_FPMC</div>
<div class="abs" style="left:28px;top:280px;width:9px;height:1px;background:repeating-linear-gradient(to right,#A0A0A0 0,#A0A0A0 1px,transparent 1px,transparent 2px)"></div>
<svg class="abs" style="left:38px;top:272px" width="16" height="16" viewBox="0 0 16 16"><rect x="1.5" y="1" width="13" height="13" fill="#fff" stroke="#111" stroke-width="1.1"/><path d="M2 4.5H14M2 8H14M2 11.5H14" stroke="#C8CCD4" stroke-width=".8"/><path d="M2.2 11.5Q5 7 8 6.5Q10 6 12.8 4.2" stroke="#10106A" stroke-width="1.5" fill="none"/></svg>
<div class="tr" style="left:59px;top:271px">CAM Chart</div>
<div class="abs" style="left:32px;top:298px;width:5px;height:1px;background:repeating-linear-gradient(to right,#A0A0A0 0,#A0A0A0 1px,transparent 1px,transparent 2px)"></div>
<div class="abs" style="left:23px;top:294px;width:9px;height:9px;border:1px solid #9A9A9A;background:#fff"><i style="position:absolute;left:1px;top:3px;width:5px;height:1px;background:#000"></i><i style="position:absolute;left:3px;top:1px;width:1px;height:5px;background:#000"></i></div>
<svg class="abs" style="left:38px;top:290px" width="16" height="16" viewBox="0 0 16 16"><rect x="0.6" y="0.6" width="13" height="13" fill="#FFF04A" stroke="#111" stroke-width="1.2"/><rect x="0" y="0" width="14.2" height="2.4" fill="#10106A"/><path d="M2.5 5H5M7 5H12M2.5 7.5H5M7 7.5H12M2.5 10H5M7 10H9" stroke="#111" stroke-width="1.2"/><path d="M9 9V7.5Q9 5.5 11 5.5Q13 5.5 13 7.5V9" stroke="#999" stroke-width="1.3" fill="none"/><rect x="6.8" y="8.6" width="8.6" height="7" rx="1" fill="#C8C8C8" stroke="#8A8A8A" stroke-width=".8"/><rect x="10.4" y="10.5" width="1.4" height="3" fill="#333"/></svg>
<div class="tr" style="left:59px;top:289px">PEP Setting</div>
</div>
<!-- GRID -->
<div id="grid">
<div class="gh" style="left:0px;top:0px;width:15px;height:42px"></div>
<div class="gh" style="left:0px;top:42px;width:16px;height:20px;z-index:2"></div>
<div class="gh" style="left:15px;top:0px;width:1081px;height:21px;font-weight:bold;font-size:13px">区域符号</div>
<div class="gh" style="left:15px;top:21px;width:180px;height:21px">类别...</div>
<div class="gc" style="left:15px;top:42px;width:180px;height:20px">VAR</div>
<div class="gh" style="left:195px;top:21px;width:180px;height:21px">符号名称</div>
<div class="gc" style="left:195px;top:42px;width:180px;height:20px"></div>
<div class="gh" style="left:375px;top:21px;width:180px;height:21px">地址</div>
<div class="gc" style="left:375px;top:42px;width:180px;height:20px"></div>
<div class="gh" style="left:555px;top:21px;width:180px;height:21px">数据型态...</div>
<div class="gc" style="left:555px;top:42px;width:180px;height:20px"></div>
<div class="gh" style="left:735px;top:21px;width:181px;height:21px">初始值</div>
<div class="gc" style="left:735px;top:42px;width:181px;height:20px"></div>
<div class="gh" style="left:916px;top:21px;width:180px;height:21px">符号注解...</div>
<div class="gc" style="left:916px;top:42px;width:180px;height:20px"></div>
</div>
<div class="abs" style="left:181px;top:202px;width:1085px;height:9px;background:#ECE9D8"></div>
<div class="abs" style="left:565px;top:202px;width:331px;height:9px;background:#F1EFE6;border:1px solid #ACA899;border-top:none;border-right-color:#C9C6B8"></div>
<div class="abs" style="left:580px;top:206px;width:300px;height:1px;background:repeating-linear-gradient(to right,#222 0,#222 1px,transparent 1px,transparent 3px)"></div>
<svg class="abs" style="left:570px;top:203px" width="9" height="6" viewBox="0 0 9 6"><path d="M1 5 L4.5 1.5 L8 5" stroke="#000" stroke-width="1.6" fill="none"/></svg>
<svg class="abs" style="left:883px;top:203px" width="9" height="6" viewBox="0 0 9 6"><path d="M1 5 L4.5 1.5 L8 5" stroke="#000" stroke-width="1.6" fill="none"/></svg>
<!-- LADDER -->
<div id="lad">
<div class="abs" style="left:0;top:0px;width:32px;height:178px;background:#FFFF00"></div>
<div class="rn" style="top:3px">00001</div>
<div class="abs" style="left:0;top:178px;width:32px;height:178px;background:#C0C0C0"></div>
<div class="rn" style="top:181px">00002</div>
<div class="abs" style="left:0;top:356px;width:32px;height:82px;background:#C0C0C0"></div>
<div class="rn" style="top:359px">00003</div>
<div class="abs" style="left:0;top:438px;width:32px;height:82px;background:#C0C0C0"></div>
<div class="rn" style="top:441px">00004</div>
<div class="rs" style="top:178px"></div>
<div class="rs" style="top:356px"></div>
<div class="rs" style="top:438px"></div>
<div class="rs" style="top:520px"></div>
<div class="abs" style="left:0;top:177px;width:32px;height:1px;background:#fff"></div>
<div class="abs" style="left:0;top:355px;width:32px;height:1px;background:#fff"></div>
<div class="abs" style="left:0;top:437px;width:32px;height:1px;background:#fff"></div>
<div class="abs" style="left:0;top:520px;width:1082px;height:1px;background:#ACA899"></div>
<div class="abs" style="left:33px;top:0;width:1049px;height:1px;background:#B8B8B8"></div>
<div class="vl" style="left:32px;top:0;height:520px"></div>
<div class="vl" style="left:41px;top:0;height:520px;width:2px;z-index:2"></div>
<div class="vl" style="left:1072px;top:0;height:520px;width:2px"></div>
<div class="ser olv" style="left:44px;top:1px">COMMENT</div>
<div class="ser" style="left:59px;top:35px">M1002</div>
<div class="hl" style="left:43px;top:58px;width:27px"></div>
<div class="bar" style="left:70px;top:51px"></div>
<div class="bar" style="left:83px;top:51px"></div>
<div class="cmt olv" style="left:42px;top:68px;width:70px">启始正向（<span class="lat2">A</span></div>
<div class="hl" style="left:85px;top:58px;width:794px"></div>
<div class="vl" style="left:861px;top:58px;height:97px"></div>
<div class="hl" style="left:861px;top:106px;width:18px"></div>
<div class="hl" style="left:861px;top:154px;width:18px"></div>
<div class="abs" style="left:791px;top:51px;width:71px;height:15px;border:1px dashed #000"></div>
<div class="box" style="top:48px"></div>
<div class="ser" style="left:882px;top:52px">DMOV</div>
<div class="ser" style="left:941px;top:52px">K100000</div>
<div class="ser" style="left:1011px;top:52px">D1826</div>
<div class="cmt olv" style="left:1011px;top:68px;width:60px">X轴寸动<span class="lat2">JO</span></div>
<div class="box" style="top:96px"></div>
<div class="ser" style="left:882px;top:100px">DMOV</div>
<div class="ser" style="left:941px;top:100px">K100000</div>
<div class="ser" style="left:1011px;top:100px">D1906</div>
<div class="cmt olv" style="left:1011px;top:116px;width:60px">Y轴寸动<span class="lat2">JO</span></div>
<div class="box" style="top:144px"></div>
<div class="ser" style="left:882px;top:148px">MOV</div>
<div class="ser" style="left:941px;top:148px">H0</div>
<div class="ser" style="left:1011px;top:148px">D1799</div>
<div class="cmt olv" style="left:1011px;top:164px;width:57px">块　狠　也</div>
<div class="ser olv" style="left:44px;top:179px">COMMENT</div>
<div class="ser" style="left:59px;top:213px">M1000</div>
<div class="hl" style="left:43px;top:236px;width:27px"></div>
<div class="bar" style="left:70px;top:229px"></div>
<div class="bar" style="left:83px;top:229px"></div>
<svg class="abs" style="left:72px;top:229px" width="11" height="15" viewBox="0 0 11 15"><path d="M5.5 14 V1.5 M1.5 6 L5.5 1 L9.5 6" stroke="#000" stroke-width="1.1" fill="none"/></svg>
<div class="cmt olv" style="left:42px;top:246px;width:70px">运转监视常开</div>
<div class="hl" style="left:85px;top:236px;width:794px"></div>
<div class="vl" style="left:861px;top:236px;height:97px"></div>
<div class="hl" style="left:861px;top:284px;width:18px"></div>
<div class="hl" style="left:861px;top:332px;width:18px"></div>
<div class="box" style="top:226px"></div>
<div class="ser" style="left:882px;top:230px">MOV</div>
<div class="ser" style="left:941px;top:230px">H0</div>
<div class="ser" style="left:1011px;top:230px">D1846</div>
<div class="box" style="top:274px"></div>
<div class="ser" style="left:882px;top:278px">MOV</div>
<div class="ser" style="left:941px;top:278px">H4000</div>
<div class="ser" style="left:1011px;top:278px">D1868</div>
<div class="cmt olv" style="left:1011px;top:294px;width:57px">设置<span class="lat2">OX</span>程序</div>
<div class="box" style="top:322px"></div>
<div class="ser" style="left:882px;top:326px">MOV</div>
<div class="ser" style="left:941px;top:326px">H1000</div>
<div class="ser" style="left:1011px;top:326px">D1846</div>
<div class="ser olv" style="left:44px;top:357px">COMMENT</div>
<div class="ser" style="left:69px;top:391px">T1</div>
<div class="hl" style="left:43px;top:414px;width:27px"></div>
<div class="bar" style="left:70px;top:407px"></div>
<div class="bar" style="left:83px;top:407px"></div>
<svg class="abs" style="left:72px;top:407px" width="11" height="15" viewBox="0 0 11 15"><path d="M2.5 13.5 L8.5 1.5" stroke="#000" stroke-width="1.2" fill="none"/></svg>
<div class="hl" style="left:85px;top:414px;width:794px"></div>
<div class="box" style="top:404px"></div>
<div class="ser" style="left:882px;top:408px">TMR</div>
<div class="ser" style="left:941px;top:408px">T0</div>
<div class="ser" style="left:1011px;top:408px">K100</div>
<div class="ser olv" style="left:44px;top:439px">COMMENT</div>
<div class="ser" style="left:69px;top:473px">T0</div>
<div class="hl" style="left:43px;top:496px;width:27px"></div>
<div class="bar" style="left:70px;top:489px"></div>
<div class="bar" style="left:83px;top:489px"></div>
<div class="hl" style="left:85px;top:496px;width:794px"></div>
<div class="box" style="top:486px"></div>
<div class="ser" style="left:882px;top:490px">TMR</div>
<div class="ser" style="left:941px;top:490px">T1</div>
<div class="ser" style="left:1011px;top:490px">K100</div>
</div>
<!-- SCROLLBARS / BOTTOM -->
<!-- left tree hscroll -->
<div class="abs" style="left:4px;top:703px;width:173px;height:17px;background:#F6F5F0"></div>
<div class="sbb" style="left:4px;top:704px;width:15px;height:15px"><svg class="abs" style="left:3px;top:2px" width="8" height="10" viewBox="0 0 8 10"><path d="M6.5 1L2 5L6.5 9" stroke="#4D6185" stroke-width="2" fill="none"/></svg></div>
<div class="sbb" style="left:22px;top:704px;width:131px;height:15px"><i class="abs" style="left:61px;top:4px;width:8px;height:6px;background:repeating-linear-gradient(to right,#EEF4FE 0,#EEF4FE 1px,#8CB0F8 1px,#8CB0F8 2px)"></i></div>
<div class="sbb" style="left:161px;top:704px;width:15px;height:15px"><svg class="abs" style="left:4px;top:2px" width="8" height="10" viewBox="0 0 8 10"><path d="M1.5 1L6 5L1.5 9" stroke="#4D6185" stroke-width="2" fill="none"/></svg></div>
<!-- left bottom tab strip -->
<div class="abs" style="left:2px;top:724px;width:5px;height:1px;background:#55524A"></div>
<div class="abs cn" style="left:10px;top:728px;font-size:13px;line-height:15px;white-space:nowrap">系统信息</div>
<div class="abs" style="left:65px;top:724px;width:113px;height:12px;background:#FFFDF0;border-top:1px solid #2A2A22;border-left:1px solid #6A675C"></div>
<!-- ladder right vscroll (3px visible) -->
<div class="abs" style="left:1263px;top:211px;width:3px;height:521px;background:#F4F3EE"></div>
<div class="abs" style="left:1263px;top:211px;width:3px;height:16px;background:#C3D5FD;border-left:1px solid #E4ECFE"></div>
<div class="abs" style="left:1263px;top:228px;width:3px;height:420px;background:#C3D5FD;border-left:1px solid #E4ECFE"></div>
<div class="abs" style="left:1263px;top:716px;width:3px;height:15px;background:#C3D5FD;border-left:1px solid #E4ECFE"></div>
<!-- ladder bottom hscroll (3px visible) -->
<div class="abs" style="left:181px;top:732px;width:1082px;height:3px;background:#F4F3EE"></div>
<div class="abs" style="left:182px;top:733px;width:14px;height:2px;background:#C9D9FC;border-radius:2px 2px 0 0"></div>
<div class="abs" style="left:199px;top:733px;width:59px;height:2px;background:#C9D9FC;border-radius:2px 2px 0 0"></div>
<div class="abs" style="left:1248px;top:733px;width:14px;height:2px;background:#C9D9FC;border-radius:2px 2px 0 0"></div>
<div class="abs" style="left:180px;top:106px;width:1px;height:629px;background:#F8F7F2"></div>
</body>
</html>
